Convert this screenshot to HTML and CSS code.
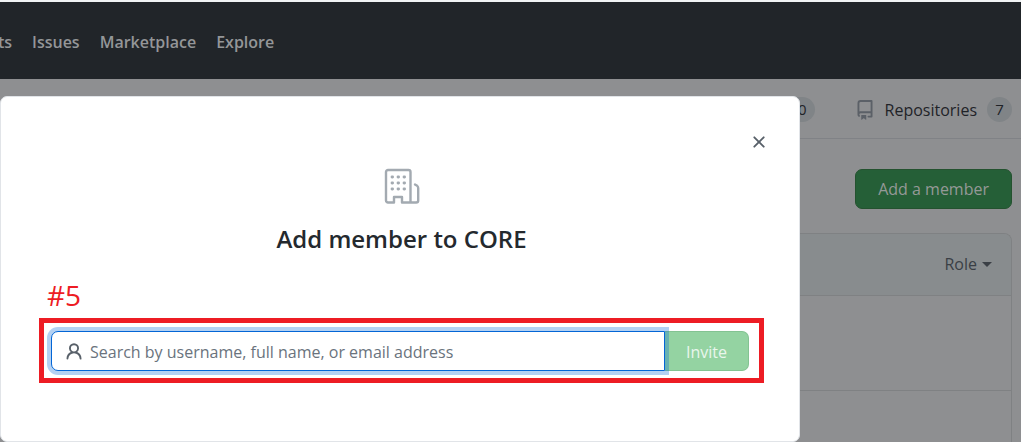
FILE: index.html
```html
<!DOCTYPE html>
<html lang="en">
<head>
<meta charset="utf-8">
<title>Add member to CORE</title>
<link rel="stylesheet" href="styles.css">
</head>
<body>
<header class="topbar">
  <nav class="nav">
    <a class="nav-link" href="#">ts</a>
    <a class="nav-link" href="#">Issues</a>
    <a class="nav-link" href="#">Marketplace</a>
    <a class="nav-link" href="#">Explore</a>
  </nav>
</header>
<main class="page">
  <nav class="tabs">
    <a class="tab" href="#"><span class="count">10</span></a>
    <a class="tab" href="#">
      <svg class="tab-icon" viewBox="0 0 16 16" width="20" height="20" fill="currentColor" aria-hidden="true"><path fill-rule="evenodd" d="M2 2.5A2.5 2.5 0 014.500 0h8.750a.75.75 0 01.75.75v12.500a.75.75 0 01-.75.75h-2.500a.75.75 0 110-1.500h1.750v-2h-8a1 1 0 00-.714 1.700.75.75 0 01-1.072 1.050A2.495 2.495 0 012 11.500v-9zm10.500-1V9h-8c-.356 0-.694.074-1 .208V2.500a1 1 0 011-1h8zM5 12.250v3.250a.25.25 0 00.4.2l1.450-1.087a.25.25 0 01.3 0L8.600 15.700a.25.25 0 00.4-.2v-3.250a.25.25 0 00-.25-.25h-3.500a.25.25 0 00-.25.25z"/></svg>
      <span class="tab-label">Repositories</span>
      <span class="count">7</span>
    </a>
  </nav>
  <div class="actions"><button class="btn btn-add" type="button">Add a member</button></div>
  <section class="members">
    <div class="members-head"><button class="role" type="button">Role<span class="caret"></span></button></div>
    <div class="member-row"></div>
    <div class="member-row member-row-last"></div>
  </section>
</main>
<div class="dialog" role="dialog" aria-labelledby="dialog-title">
  <button class="close" type="button" aria-label="Close">
    <svg viewBox="0 0 16 16" width="20" height="20" fill="currentColor" aria-hidden="true"><path d="M3.720 3.720a.75.75 0 011.060 0L8 6.940l3.220-3.220a.75.75 0 111.060 1.060L9.060 8l3.220 3.220a.75.75 0 11-1.060 1.060L8 9.060l-3.220 3.220a.75.75 0 01-1.060-1.060L6.940 8 3.720 4.780a.75.75 0 010-1.060z"/></svg>
  </button>
  <svg class="org-icon" viewBox="0 0 36 38" width="36" height="38" fill="none" stroke="currentColor" stroke-width="2.400" stroke-linecap="round" stroke-linejoin="round" aria-hidden="true">
    <path d="M10 34.500H4a2 2 0 01-2-2V4a2 2 0 012-2h20.500a2 2 0 012 2v30.500H18v-5.500h-8v5.500zM26.500 34.500h5.700a2 2 0 002-2V20a3 3 0 00-1-2.200L31 16.500"/>
    <path stroke-width="2.800" d="M8 9h.6M14 9h.6M20 9h.6M8 15h.6M14 15h.6M20 15h.6M8 21h.6M14 21h.6M20 21h.6"/>
  </svg>
  <h1 class="title" id="dialog-title">Add member to CORE</h1>
  <p class="step">#5</p>
  <form class="invite">
    <label class="search">
      <svg class="person" viewBox="0 0 16 16" width="20" height="20" fill="currentColor" aria-hidden="true"><path fill-rule="evenodd" d="M10.500 5a2.500 2.500 0 11-5 0 2.500 2.500 0 015 0zm.061 3.073a4 4 0 10-5.123 0 6.004 6.004 0 00-3.431 5.142.75.75 0 001.498.070 4.500 4.500 0 018.990 0 .75.75 0 101.498-.070 6.005 6.005 0 00-3.432-5.142z"/></svg>
      <input class="search-input" type="text" aria-label="Search members" placeholder="Search by username, full name, or email address">
    </label>
    <button class="btn btn-invite" type="button">Invite</button>
  </form>
</div>
</body>
</html>
```
FILE: styles.css
```css
* { box-sizing: border-box; }
body {
  position: relative;
  min-height: 100vh;
  margin: 0;
  display: flex;
  flex-direction: column;
  background: #8e8f91;
  color: #24292e;
  font-family: "Segoe UI", "Open Sans", "Noto Sans", sans-serif;
  font-size: 16px;
  line-height: 24px;
}
a { color: inherit; text-decoration: none; }
button, input { font: inherit; }
button { cursor: pointer; }
.topbar {
  border-top: 2px solid #f1f3f4;
  background: #212529;
  color: #949698;
  padding: 29px 0 27px;
}
.nav { display: flex; gap: 20px; height: 21px; align-items: center; font-weight: 600; }
.nav-link:first-child { width: 12px; display: flex; justify-content: flex-end; }
.page { flex: 1; display: flex; flex-direction: column; }
.tabs {
  display: flex;
  justify-content: flex-end;
  gap: 40px;
  padding: 18px 9px 16px;
  border-bottom: 1px solid #808286;
}
.tab { display: flex; align-items: center; color: #1f2328; }
.tab-icon { margin-right: 10px; color: #5b6067; }
.tab-label { margin-right: 10px; }
.count {
  min-width: 25px;
  padding: 0 8px;
  border-radius: 13px;
  background: #808487;
  font-size: 15px;
  line-height: 25px;
  text-align: center;
}
.actions { display: flex; justify-content: flex-end; padding: 30px 9px 24px; }
.btn { border: 1px solid #24522f; border-radius: 7px; padding: 7px 22px; }
.btn-add { background: #255f37; color: #959997; }
.members {
  flex: 1;
  display: flex;
  flex-direction: column;
  margin: 0 9px;
  border: 1px solid #7f8183;
  border-bottom: 0;
  border-radius: 8px 8px 0 0;
}
.members-head {
  display: flex;
  justify-content: flex-end;
  padding: 18px 19px 19px;
  border-radius: 7px 7px 0 0;
  background: #888c8e;
}
.role {
  display: flex;
  align-items: center;
  gap: 5px;
  padding: 0;
  border: 0;
  background: none;
  color: #3a3f45;
}
.caret { border: 5px solid transparent; border-top-color: currentColor; border-bottom: 0; }
.member-row { height: 95px; border-top: 1px solid #7f8183; }
.member-row-last { flex: 1; height: auto; }
.dialog {
  position: absolute;
  top: 96px;
  left: 0;
  width: 100%;
  max-width: 800px;
  padding: 71px 35px 58px 38px;
  display: flex;
  flex-direction: column;
  border: 1px solid #e1e4e8;
  border-radius: 7px;
  background: #fff;
}
.close {
  position: absolute;
  top: 35px;
  right: 30px;
  display: flex;
  padding: 0;
  border: 0;
  background: none;
  color: #586069;
}
.org-icon { align-self: center; color: #a3aab1; }
.title { margin: 17px 0 0; font-size: 24px; line-height: 32px; font-weight: 600; text-align: center; }
.step { margin: 22px 8px 5px; color: #ed1c24; font-size: 28px; line-height: 36px; }
.invite { display: flex; padding: 8px 10px 7px 7px; border: 5px solid #ed1c24; }
.search {
  position: relative;
  z-index: 1;
  flex: 1;
  display: flex;
  align-items: center;
  gap: 6px;
  padding: 2px 12px 0;
  border: 1px solid #0366d6;
  border-radius: 7px 0 0 7px;
  background: #fff;
  box-shadow: 0 0 0 4px rgba(3, 102, 214, 0.3);
}
.person { color: #586069; }
.search-input {
  flex: 1;
  min-width: 0;
  padding: 0;
  border: 0;
  outline: 0;
  background: none;
  color: #24292e;
}
.search-input::placeholder { color: #6a737d; opacity: 1; }
.btn-invite {
  padding: 8px 21px 6px;
  border-color: #83c392;
  border-left: 0;
  border-radius: 0 7px 7px 0;
  background: #94d3a2;
  color: #e9f6ec;
}
```
